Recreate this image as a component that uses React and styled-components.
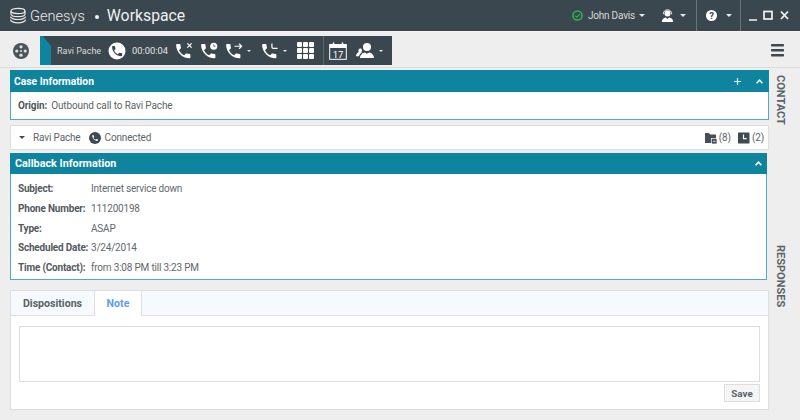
import React from "react";
import styled, { createGlobalStyle } from "styled-components";

const Global = createGlobalStyle`
  html, body { margin: 0; padding: 0; background: #eeeeee; }
  * { box-sizing: border-box; }
`;
const Page = styled.div`
  width: 800px; height: 420px; overflow: hidden; display: flex; flex-direction: column;
  font-family: Roboto, "Liberation Sans", sans-serif; color: #5a6268; background: #eeeeee;
`;
const TopBar = styled.header`
  height: 31px; flex: none; background: #3b474e; color: #fff; display: flex; align-items: center;
`;
const Brand = styled.div`
  display: flex; align-items: center; padding-left: 9px; flex: 1;
`;
const BrandName = styled.span`
  font-size: 14.6px; font-weight: 300; margin-left: 3px; color: #e8eaeb;
`;
const BrandDot = styled.span`
  width: 4px; height: 4px; border-radius: 50%; background: #f2f3f3; margin: 2px 8px 0 10px;
`;
const BrandProduct = styled.span`
  font-size: 15.8px; font-weight: 400; color: #eef0f0;
`;
const UserName = styled.span`
  font-size: 10px; letter-spacing: -0.2px; color: #d6dadb; margin-left: 5px;
`;
const Caret = styled.i`
  display: block; flex: none; width: 0; height: 0;
  border-left: ${p => p.$s || 3}px solid transparent; border-right: ${p => p.$s || 3}px solid transparent;
  border-top: ${p => p.$s || 3}px solid ${p => p.$c || "#e6e8e9"};
  margin-left: ${p => p.$ml ?? 4}px; margin-right: ${p => p.$mr ?? 0}px;
`;
const TopGroup = styled.div`
  display: flex; align-items: center; height: 31px; padding: 0 ${p => p.$pr ?? 8}px 0 ${p => p.$pl ?? 9}px;
  border-left: ${p => (p.$sep ? "1px solid #6a757b" : "none")};
`;
const ToolRow = styled.div`
  height: 37px; flex: none; display: flex; align-items: center; padding: 2px 15px 0 13px;
  border-top: 1px solid #f5f5f5; border-bottom: 1px solid #dcdcdc; background: #eeeeee;
`;
const InteractionBar = styled.div`
  margin-left: 11px; width: 352px; height: 29px; background: #3b474e; display: flex; align-items: center; color: #fff;
`;
const Stripe = styled.div`
  width: 11px; height: 29px; flex: none; background: #0e849e; position: relative; overflow: hidden;
  &::after {
    content: ""; position: absolute; top: 0; right: 0; width: 0; height: 0;
    border-top: 10px solid #3b474e; border-left: 8px solid transparent;
  }
`;
const ContactName = styled.span`
  font-size: 9px; color: #d9dcdd; margin-left: 6px; width: 51px; white-space: nowrap; flex: none;
`;
const Timer = styled.span`
  font-size: 9.3px; color: #e3e5e6; margin: 0 8px 0 6px; width: 36px; flex: none; white-space: nowrap;
`;
const CallIcon = styled.span`
  display: flex; align-items: center; flex: none; margin-right: ${p => p.$mr ?? 8}px; margin-left: ${p => p.$ml ?? 0}px;
`;
const KeypadGrid = styled.div`
  display: grid; grid-template-columns: repeat(3, 5px); grid-auto-rows: 5px; gap: 1px; margin-right: 9px; flex: none;
`;
const KeypadKey = styled.b`
  background: #fff; border-radius: 1px; display: block;
`;
const BarDivider = styled.div`
  width: 1px; height: 29px; background: #5c676d; margin-right: 5px; flex: none;
`;
const Spacer = styled.div`flex: 1;`;
const Main = styled.div`
  flex: 1; display: flex; min-height: 0;
`;
const Column = styled.div`
  width: 759px; margin-left: 10px; padding-top: 2px; display: flex; flex-direction: column; flex: none;
`;
const Rail = styled.aside`
  flex: 1; display: flex; flex-direction: column; align-items: flex-start; padding: 7px 0 0 5px;
`;
const RailLabel = styled.div`
  writing-mode: vertical-rl; font-size: 11px; font-weight: 700; color: #5a6268; line-height: 12px;
  margin-top: ${p => p.$mt || 0}px;
`;
const Panel = styled.section`
  width: ${p => p.$w || 759}px; flex: none; background: #fff; border: 1px solid #55a9bc; border-top: 0;
  margin-top: ${p => p.$mt || 0}px;
`;
const PanelHead = styled.div`
  margin: 0 -1px; background: #0e849e; color: #fff; display: flex; align-items: center; justify-content: space-between;
  height: ${p => p.$h}px; font-size: ${p => p.$fs}px; font-weight: 700; padding: 0 ${p => p.$pr}px 0 ${p => p.$pl}px;
`;
const HeadTools = styled.div`
  display: flex; align-items: center; gap: 15px;
`;
const OriginRow = styled.div`
  height: 27px; display: flex; align-items: center; padding-left: 7px; font-size: 10px; letter-spacing: -0.12px; color: #5c6469; white-space: nowrap;
`;
const Strong = styled.b`
  font-weight: 700; margin-right: 4px; color: #50585d;
`;
const ContactRow = styled.div`
  width: 759px; height: 25px; flex: none; margin-top: 5px; background: #fff; border: 1px solid #dedede;
  display: flex; align-items: center; font-size: 10px; letter-spacing: -0.15px; color: #5c6469; padding: 0 4px 0 8px;
`;
const RowText = styled.span`
  margin-left: ${p => p.$ml || 0}px; white-space: nowrap;
`;
const InfoBody = styled.div`
  padding: 5px 0 0 7px; height: 105px;
`;
const InfoRow = styled.div`
  display: flex; align-items: center; height: 19.7px; font-size: 10px; letter-spacing: -0.2px; white-space: nowrap;
`;
const InfoLabel = styled.span`
  width: 73px; flex: none; font-weight: 700; color: #53595e;
`;
const InfoValue = styled.span`
  color: #62696e;
`;
const TabsPanel = styled.section`
  width: 759px; height: 120px; flex: none; margin-top: 10px; background: #fff; border: 1px solid #dedede; display: flex; flex-direction: column;
`;
const TabStrip = styled.div`
  height: 25px; flex: none; display: flex; background: #f6f9fd; border-bottom: 1px solid #dedede;
`;
const Tab = styled.div`
  height: ${p => (p.$active ? 25 : 24)}px; display: flex; align-items: center; justify-content: center; flex: none;
  width: ${p => p.$w}px; font-size: 10.6px; font-weight: 700;
  color: ${p => (p.$active ? "#5f9cf2" : "#5a6268")};
  background: ${p => (p.$active ? "#fff" : "transparent")};
  border-left: ${p => (p.$active ? "1px solid #dedede" : "0")};
  border-right: ${p => (p.$active ? "1px solid #dedede" : "0")};
`;
const TabBody = styled.div`
  flex: 1; padding: 10px 8px 0 8px; display: flex; flex-direction: column; align-items: flex-end;
`;
const NoteArea = styled.div`
  width: 100%; height: 56px; border: 1px solid #dedede; background: #fff; flex: none;
`;
const SaveButton = styled.button`
  margin-top: 2px; width: 36px; height: 18px; padding: 0; border: 1px solid #dedede; background: #f5f5f5;
  font-family: inherit; font-size: 9.8px; font-weight: 700; color: #5a6268;
`;

const handset = "M6.62 10.79c1.44 2.83 3.76 5.14 6.59 6.59l2.2-2.2c.27-.27.67-.36 1.02-.24 1.12.37 2.33.57 3.57.57.55 0 1 .45 1 1V20c0 .55-.45 1-1 1-9.39 0-17-7.61-17-17 0-.55.45-1 1-1h3.5c.55 0 1 .45 1 1 0 1.25.2 2.45.57 3.57.11.35.03.74-.25 1.02l-2.2 2.2z";

const Handset = ({ extra }) => (
  <svg width="17" height="17" viewBox="0 0 24 24" fill="#fff">
    <path transform="translate(-3.2 -.6) scale(1.12)" d={handset} />
    {extra}
  </svg>
);

const LogoStack = () => (
  <svg width="18" height="18" viewBox="0 0 18 18" fill="none" stroke="#e6e8e9" strokeWidth="1.2">
    <ellipse cx="9" cy="4" rx="7" ry="2.6" />
    <path d="M2 4v3c0 1.4 3.1 2.6 7 2.6S16 8.4 16 7V4M1.5 9.5c0 1.6 3.3 3 7.5 3s7.5-1.4 7.5-3M1.5 12.5c0 1.9 3.3 3.4 7.5 3.4s7.5-1.5 7.5-3.4" />
  </svg>
);

const StatusIcon = () => (
  <svg width="11" height="11" viewBox="0 0 11 11" fill="none" stroke="#2db84d" strokeWidth="1.5">
    <circle cx="5.5" cy="5.5" r="4.6" />
    <path d="M3.2 5.6l1.6 1.6 3-3" strokeWidth="1.1" />
  </svg>
);

const AgentTop = () => (
  <svg width="13" height="14" viewBox="0 0 13 14" fill="#fff" style={{ marginLeft: 16 }}>
    <circle cx="6.5" cy="4.6" r="3" />
    <path d="M2.3 5.2C2.3 2.6 4 .8 6.5.8s4.2 1.8 4.2 4.4" fill="none" stroke="#fff" strokeWidth=".9" />
    <path d="M.8 13c.2-2.8 2-4 4-4.4l1.7 1.4 1.7-1.4c2 .4 3.8 1.6 4 4.4z" />
  </svg>
);

const HelpIcon = () => (
  <svg width="11" height="11" viewBox="0 0 11 11">
    <circle cx="5.5" cy="5.5" r="5.5" fill="#fff" />
    <text x="5.5" y="8.9" textAnchor="middle" fontSize="9.5" fontWeight="700" fontFamily="Roboto, sans-serif" fill="#3b474e">?</text>
  </svg>
);

const WindowButtons = () => (
  <svg width="41" height="11" viewBox="0 0 41 11" fill="none" stroke="#f2f3f3">
    <path d="M0 10h8" strokeWidth="1.5" />
    <rect x="15" y="1.5" width="8" height="7.5" strokeWidth="1.7" />
    <path d="M32 1.5l7 7.5M39 1.5l-7 7.5" strokeWidth="1.8" />
  </svg>
);

const ReelIcon = () => (
  <svg width="16" height="16" viewBox="0 0 16 16">
    <circle cx="8" cy="8" r="8" fill="#4a545a" />
    <g fill="#dfe2e3">
      <circle cx="8" cy="3.8" r="1.6" />
      <circle cx="8" cy="12.2" r="1.6" />
      <circle cx="3.8" cy="8" r="1.6" />
      <circle cx="12.2" cy="8" r="1.6" />
    </g>
    <circle cx="8" cy="8" r="1" fill="#dfe2e3" />
  </svg>
);

const PhoneDisc = () => (
  <svg width="18" height="18" viewBox="0 0 18 18">
    <circle cx="9" cy="9" r="8.5" fill="#fff" />
    <path transform="translate(2.4 2.4) scale(.56)" d={handset} fill="#3b474e" />
  </svg>
);

const CalendarIcon = () => (
  <svg width="18" height="18" viewBox="0 0 18 18" fill="none" stroke="#fff">
    <rect x=".7" y="2.5" width="16.6" height="14.8" strokeWidth="1" />
    <path d="M.7 3h16.6v3H.7z" fill="#fff" stroke="none" />
    <path d="M4.5 .5v3M13.5 .5v3" strokeWidth="1.6" />
    <text x="9" y="15.5" textAnchor="middle" fontSize="9.5" fontFamily="Roboto, sans-serif" fill="#fff" stroke="none">17</text>
  </svg>
);

const AgentsIcon = () => (
  <svg width="19" height="17" viewBox="0 0 19 17" fill="#fff">
    <circle cx="11" cy="5" r="4" />
    <path d="M4 16c.2-3.6 2.6-5 4.8-5.6l2.2 1.4 2.2-1.4c2.4.6 4.6 2 4.8 5.6z" />
    <path d="M2.4 8.3a1.8 1.8 0 1 1 3 1.3c.2 0 .4.4.6.6-1.4.9-2.6 2.2-3 4H0c.1-2 .9-3.4 2.8-4.3-.3-.4-.4-1-.4-1.6z" />
  </svg>
);

const Chevron = () => (
  <svg width="7" height="5" viewBox="0 0 7 5" fill="none" stroke="#fff" strokeWidth="1.6"><path d="M.6 4.2L3.5 1.2l2.9 3" /></svg>
);
const Plus = () => (
  <svg width="7" height="7" viewBox="0 0 7 7" stroke="#dceef2" strokeWidth="1.2"><path d="M3.5 0v7M0 3.5h7" /></svg>
);
const SmallPhone = () => (
  <svg width="12" height="12" viewBox="0 0 12 12" style={{ marginLeft: 8 }}>
    <circle cx="6" cy="6" r="6" fill="#3f4a50" />
    <path transform="translate(2.2 2.2) scale(.32)" d={handset} fill="#fff" />
  </svg>
);
const FolderIcon = () => (
  <svg width="12" height="12" viewBox="0 0 12 12" style={{ marginLeft: "auto" }}>
    <path d="M0 1h4l1 1.5h6V11H0z" fill="#454f55" />
    <rect x="6.5" y="6.5" width="5.5" height="5.5" fill="#454f55" stroke="#fff" strokeWidth=".7" />
    <path d="M8 9.2h2.5" stroke="#fff" strokeWidth=".8" />
  </svg>
);
const ClockSquare = () => (
  <svg width="12" height="12" viewBox="0 0 12 12" style={{ marginLeft: 7 }}>
    <rect width="11.5" height="11" y=".5" rx=".5" fill="#3f4a50" />
    <path d="M5.5 2.5v4.2h3.2" fill="none" stroke="#fff" strokeWidth="1.2" />
  </svg>
);

export default function App() {
  return (
    <Page>
      <Global />
      <TopBar>
        <Brand>
          <LogoStack />
          <BrandName>Genesys</BrandName>
          <BrandDot />
          <BrandProduct>Workspace</BrandProduct>
        </Brand>
        <StatusIcon />
        <UserName>John Davis</UserName>
        <Caret $s={3} />
        <AgentTop />
        <Caret $s={3} $ml={6} $mr={10} />
        <TopGroup $sep>
          <HelpIcon />
          <Caret $s={3} $ml={9} />
        </TopGroup>
        <TopGroup $sep $pr={10} $pl={8}>
          <WindowButtons />
        </TopGroup>
      </TopBar>
      <ToolRow>
        <ReelIcon />
        <InteractionBar>
          <Stripe />
          <ContactName>Ravi Pache</ContactName>
          <PhoneDisc />
          <Timer>00:00:04</Timer>
          <CallIcon>
            <Handset extra={<path d="M16 2l6 6M22 2l-6 6" stroke="#fff" strokeWidth="1.8" />} />
          </CallIcon>
          <CallIcon>
            <Handset extra={<g><circle cx="18" cy="6" r="5" /><path d="M18 3.5V6h2.5" fill="none" stroke="#3b474e" strokeWidth="1.1" /></g>} />
          </CallIcon>
          <CallIcon $mr={0}>
            <Handset extra={<path d="M12 6h10M18.5 2.5L22 6l-3.5 3.5" fill="none" stroke="#fff" strokeWidth="1.7" />} />
          </CallIcon>
          <Caret $s={2.5} $ml={4} $mr={11} />
          <CallIcon $mr={0}>
            <Handset extra={<path d="M14 2v5c0 1.2 1 2 2 2h6" fill="none" stroke="#fff" strokeWidth="1.7" />} />
          </CallIcon>
          <Caret $s={2.5} $ml={4} $mr={10} />
          <KeypadGrid>
            {Array.from({ length: 9 }, (_, i) => <KeypadKey key={i} />)}
          </KeypadGrid>
          <BarDivider />
          <CalendarIcon />
          <CallIcon $mr={0} $ml={9}>
            <AgentsIcon />
          </CallIcon>
          <Caret $s={2.5} $ml={4} />
        </InteractionBar>
        <Spacer />
        <svg width="14" height="13" viewBox="0 0 14 13" fill="#3f4a50">
          <rect y="0" width="13" height="2.4" rx=".6" />
          <rect y="5" width="13" height="2.4" rx=".6" />
          <rect y="10" width="13" height="2.4" rx=".6" />
        </svg>
      </ToolRow>
      <Main>
        <Column>
          <Panel>
            <PanelHead $h={22} $fs={10.3} $pl={4} $pr={6}>
              Case Information
              <HeadTools><Plus /><Chevron /></HeadTools>
            </PanelHead>
            <OriginRow><Strong>Origin:</Strong> Outbound call to Ravi Pache</OriginRow>
          </Panel>
          <ContactRow>
            <Caret $s={3} $c="#3f4a50" $ml={0} />
            <RowText $ml={8}>Ravi Pache</RowText>
            <SmallPhone />
            <RowText $ml={4}>Connected</RowText>
            <FolderIcon />
            <RowText $ml={2}>(8)</RowText>
            <ClockSquare />
            <RowText $ml={2}>(2)</RowText>
          </ContactRow>
          <Panel $w={757} $mt={3}>
            <PanelHead $h={21} $fs={10.8} $pl={5} $pr={5}>
              Callback Information
              <Chevron />
            </PanelHead>
            <InfoBody>
              <InfoRow><InfoLabel>Subject:</InfoLabel><InfoValue>Internet service down</InfoValue></InfoRow>
              <InfoRow><InfoLabel>Phone Number:</InfoLabel><InfoValue>111200198</InfoValue></InfoRow>
              <InfoRow><InfoLabel>Type:</InfoLabel><InfoValue>ASAP</InfoValue></InfoRow>
              <InfoRow><InfoLabel>Scheduled Date:</InfoLabel><InfoValue>3/24/2014</InfoValue></InfoRow>
              <InfoRow><InfoLabel>Time (Contact):</InfoLabel><InfoValue>from 3:08 PM till 3:23 PM</InfoValue></InfoRow>
            </InfoBody>
          </Panel>
          <TabsPanel>
            <TabStrip>
              <Tab $w={83}>Dispositions</Tab>
              <Tab $w={48} $active>Note</Tab>
            </TabStrip>
            <TabBody>
              <NoteArea />
              <SaveButton>Save</SaveButton>
            </TabBody>
          </TabsPanel>
        </Column>
        <Rail>
          <RailLabel>CONTACT</RailLabel>
          <RailLabel $mt={120}>RESPONSES</RailLabel>
        </Rail>
      </Main>
    </Page>
  );
}
